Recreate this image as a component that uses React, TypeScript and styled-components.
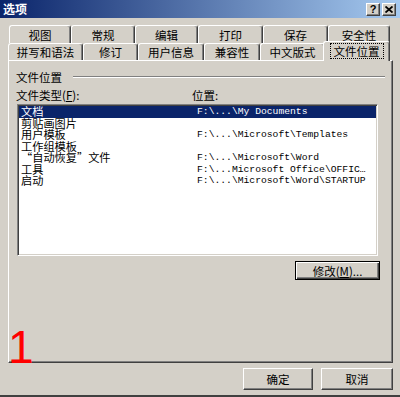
import styled, { createGlobalStyle } from 'styled-components';

const GlobalStyle = createGlobalStyle`
  html, body {
    margin: 0;
    padding: 0;
    background: #d4d0c8;
  }
  body {
    font-family: "Noto Sans CJK SC", "Noto Sans", sans-serif;
    color: #000;
  }
`;

const Window = styled.div`
  position: relative;
  width: 400px;
  height: 397px;
  box-sizing: border-box;
  background: #d4d0c8;
  border-bottom: 2px solid #404040;
  display: flex;
  flex-direction: column;
  overflow: hidden;
`;

const TitleBar = styled.div`
  height: 18px;
  flex: none;
  display: flex;
  align-items: center;
  justify-content: space-between;
  padding: 0 4px 0 3px;
  background: linear-gradient(to right, #0a246a, #a6caf0);
`;

const Title = styled.span`
  color: #fff;
  font-size: 12px;
  font-weight: bold;
  line-height: 18px;
`;

const Controls = styled.div`
  display: flex;
  gap: 2px;
`;

const CtrlButton = styled.div`
  width: 14px;
  height: 13px;
  box-sizing: border-box;
  background: #d4d0c8;
  border-top: 1px solid #fff;
  border-left: 1px solid #fff;
  border-right: 1px solid #404040;
  border-bottom: 1px solid #404040;
  box-shadow: inset -1px -1px #808080;
  display: flex;
  align-items: center;
  justify-content: center;
  font-family: "Liberation Sans", Arial, sans-serif;
  font-size: 11px;
  font-weight: bold;
  line-height: 1;
`;

const Body = styled.div`
  flex: 1;
  display: flex;
  flex-direction: column;
  padding: 7px 7px 5px 8px;
  min-height: 0;
`;

const TabRow = styled.div<{ $h: number; $indent?: number }>`
  display: flex;
  align-items: flex-end;
  height: ${(p) => p.$h}px;
  padding-left: ${(p) => p.$indent ?? 0}px;
`;

const Tab = styled.div<{ $w: number; $active?: boolean }>`
  flex: none;
  width: ${(p) => p.$w}px;
  height: 100%;
  box-sizing: border-box;
  border-top: 1px solid #fff;
  border-left: 1px solid #fff;
  border-right: 1px solid #404040;
  box-shadow: inset -1px 0 #808080;
  border-radius: 3px 3px 0 0;
  background: #d4d0c8;
  display: flex;
  align-items: center;
  justify-content: center;
  font-size: 11.5px;
  line-height: 14px;
  white-space: nowrap;

  ${(p) =>
    p.$active &&
    `
    position: relative;
    height: 20px;
    margin: 0 -2px -1px -2px;
    width: ${p.$w + 4}px;
    padding-bottom: 2px;
  `}
`;

const Focus = styled.span`
  outline: 1px dotted #000;
  padding: 0 3px;
`;

const Panel = styled.div`
  flex: 1;
  display: flex;
  flex-direction: column;
  box-sizing: border-box;
  border-top: 1px solid #fff;
  border-left: 1px solid #fff;
  border-right: 1px solid #404040;
  border-bottom: 1px solid #404040;
  box-shadow: inset -1px -1px #808080;
  padding: 9px 13px 0 7px;
`;

const GroupHeader = styled.div`
  display: flex;
  align-items: center;
  gap: 11px;
  height: 14px;
  font-size: 11.5px;
  line-height: 14px;
`;

const Rule = styled.div`
  flex: 1;
  margin-right: -6px;
  border-top: 1px solid #808080;
  border-bottom: 1px solid #fff;
`;

const FieldLabels = styled.div`
  display: grid;
  grid-template-columns: 176px 1fr;
  height: 14px;
  margin-top: 4px;
  font-size: 11.5px;
  line-height: 14px;
`;

const ListBox = styled.div`
  margin: 2px 1px 0 1px;
  height: 152px;
  box-sizing: border-box;
  background: #fff;
  border-top: 1px solid #808080;
  border-left: 1px solid #808080;
  border-right: 1px solid #fff;
  border-bottom: 1px solid #fff;
  box-shadow: inset 1px 1px #404040, inset -1px -1px #d4d0c8;
  padding: 1px;
`;

const Row = styled.div<{ $selected?: boolean }>`
  display: grid;
  grid-template-columns: 176px 1fr;
  height: 11.5px;
  padding-left: 2px;
  align-items: center;
  background: ${(p) => (p.$selected ? '#0a246a' : 'transparent')};
  color: ${(p) => (p.$selected ? '#fff' : '#000')};
  white-space: nowrap;
`;

const ItemName = styled.span`
  font-size: 11.2px;
  line-height: 11.5px;
`;

const ItemPath = styled.span`
  font-family: "Liberation Mono", "Courier New", monospace;
  font-size: 9.7px;
  line-height: 11.5px;
`;

const ButtonRow = styled.div`
  display: flex;
  justify-content: flex-end;
  margin: 5px -1px 0 0;
`;

const DialogButton = styled.div<{ $w: number; $h: number; $default?: boolean }>`
  width: ${(p) => p.$w}px;
  height: ${(p) => p.$h}px;
  box-sizing: border-box;
  background: #d4d0c8;
  display: flex;
  align-items: center;
  justify-content: center;
  font-size: 11.5px;
  line-height: 14px;
  ${(p) =>
    p.$default
      ? `
    border: 1px solid #000;
    box-shadow: inset 1px 1px #fff, inset -1px -1px #404040, inset -2px -2px #808080;
  `
      : `
    border-top: 1px solid #fff;
    border-left: 1px solid #fff;
    border-right: 1px solid #404040;
    border-bottom: 1px solid #404040;
    box-shadow: inset -1px -1px #808080;
  `}
`;

const Footer = styled.div`
  flex: none;
  display: flex;
  justify-content: flex-end;
  gap: 8px;
  margin-top: 5px;
`;

const Marker = styled.div`
  position: absolute;
  left: 8px;
  top: 324px;
  color: #ff0000;
  font-family: "Liberation Sans", Arial, sans-serif;
  font-size: 46px;
  line-height: 1;
`;

const rowOne = [
  { label: '视图', w: 62 },
  { label: '常规', w: 64 },
  { label: '编辑', w: 63 },
  { label: '打印', w: 65 },
  { label: '保存', w: 65 },
  { label: '安全性', w: 62 },
];

const rowTwo = [
  { label: '拼写和语法', w: 75 },
  { label: '修订', w: 55 },
  { label: '用户信息', w: 66 },
  { label: '兼容性', w: 56 },
  { label: '中文版式', w: 65 },
];

const items = [
  { name: '文档', path: 'F:\\...\\My Documents' },
  { name: '剪贴画图片', path: '' },
  { name: '用户模板', path: 'F:\\...\\Microsoft\\Templates' },
  { name: '工作组模板', path: '' },
  { name: '“自动恢复”文件', path: 'F:\\...\\Microsoft\\Word' },
  { name: '工具', path: 'F:\\...Microsoft Office\\OFFIC…' },
  { name: '启动', path: 'F:\\...\\Microsoft\\Word\\STARTUP' },
];

export default function App() {
  return (
    <>
      <GlobalStyle />
      <Window>
        <TitleBar>
          <Title>选项</Title>
          <Controls>
            <CtrlButton>?</CtrlButton>
            <CtrlButton>
              <svg width="8" height="7" viewBox="0 0 8 7">
                <path d="M0.5 0.5 L7.5 6.5 M7.5 0.5 L0.5 6.5" stroke="#000" strokeWidth="1.8" />
              </svg>
            </CtrlButton>
          </Controls>
        </TitleBar>
        <Body>
          <TabRow $h={18} $indent={1}>
            {rowOne.map((t) => (
              <Tab key={t.label} $w={t.w}>
                {t.label}
              </Tab>
            ))}
          </TabRow>
          <TabRow $h={17}>
            {rowTwo.map((t) => (
              <Tab key={t.label} $w={t.w}>
                {t.label}
              </Tab>
            ))}
            <Tab $w={63} $active>
              <Focus>文件位置</Focus>
            </Tab>
          </TabRow>
          <Panel>
            <GroupHeader>
              <span>文件位置</span>
              <Rule />
            </GroupHeader>
            <FieldLabels>
              <span>
                文件类型(<u>F</u>):
              </span>
              <span>位置:</span>
            </FieldLabels>
            <ListBox>
              {items.map((it, i) => (
                <Row key={it.name} $selected={i === 0}>
                  <ItemName>{it.name}</ItemName>
                  <ItemPath>{it.path}</ItemPath>
                </Row>
              ))}
            </ListBox>
            <ButtonRow>
              <DialogButton $w={85} $h={19} $default>
                修改(<u>M</u>)...
              </DialogButton>
            </ButtonRow>
          </Panel>
          <Footer>
            <DialogButton $w={70} $h={22}>确定</DialogButton>
            <DialogButton $w={72} $h={22}>取消</DialogButton>
          </Footer>
        </Body>
        <Marker>1</Marker>
      </Window>
    </>
  );
}
